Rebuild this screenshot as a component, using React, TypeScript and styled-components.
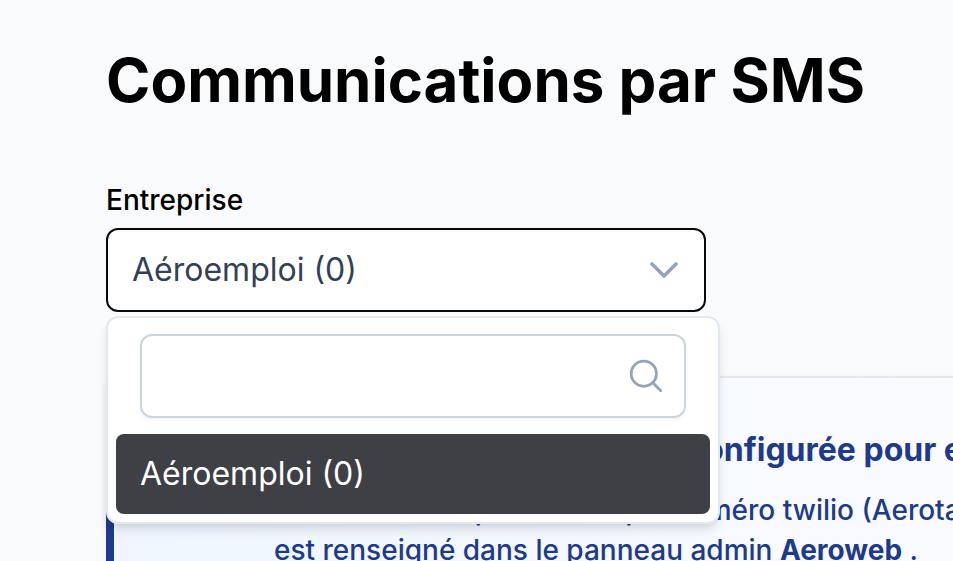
import React from "react";
import styled, { createGlobalStyle } from "styled-components";

const GlobalStyle = createGlobalStyle`
  * { box-sizing: border-box; }
  html, body { margin: 0; overflow: hidden; background: #f9fafc; }
  body { font-family: Inter, sans-serif; color: #000; }
  h1, h2, p { margin: 0; }
`;

const Page = styled.main`
  height: 561px;
  padding: 44px 0 0 106px;
  overflow: hidden;
`;

const Title = styled.h1`
  font-size: 60px;
  line-height: 72px;
  font-weight: 700;
  white-space: nowrap;
`;

const Field = styled.div`
  position: relative;
  width: 600px;
  margin-top: 64px;
`;

const Label = styled.label`
  display: block;
  font-size: 28px;
  font-weight: 500;
  line-height: 40px;
  margin-bottom: 8px;
`;

const Select = styled.div`
  display: flex;
  align-items: center;
  justify-content: space-between;
  height: 84px;
  padding: 0 26px 0 24px;
  border: 2px solid #09090b;
  border-radius: 12px;
  background: #fff;
  color: #334155;
  font-size: 32px;
`;

const Value = styled.span`
  padding-bottom: 2px;
`;

const Overlay = styled.div`
  position: absolute;
  z-index: 2;
  top: 136px;
  left: 0;
  width: 614px;
  height: 208px;
  border: 2px solid #e2e8f0;
  border-radius: 12px;
  background: #fff;
  box-shadow: 0 8px 12px -2px rgba(0, 0, 0, 0.1), 0 4px 8px -4px rgba(0, 0, 0, 0.1);
`;

const Filter = styled.div`
  display: flex;
  align-items: center;
  justify-content: flex-end;
  width: 546px;
  height: 84px;
  margin: 16px 32px;
  padding-right: 20px;
  border: 2px solid #cbd5e1;
  border-radius: 12px;
  box-shadow: 0 2px 4px rgba(18, 18, 23, 0.05);
`;

const Option = styled.div`
  display: flex;
  align-items: center;
  height: 80px;
  margin: 0 8px;
  padding: 0 24px;
  border-radius: 8px;
  background: #3f3f46;
  color: #fff;
  font-size: 32px;
`;

const Notice = styled.section`
  display: flex;
  gap: 54px;
  width: 1500px;
  height: 300px;
  margin-top: 64px;
  padding-left: 56px;
  border: 2px solid #e5e7eb;
  border-left: 8px solid #1e3a8a;
  border-radius: 12px;
  background: linear-gradient(90deg, #eff6ff, #fafbff 58%);
  box-shadow: 0 2px 6px rgba(0, 0, 0, 0.08);
  color: #1e3a8a;
`;

const InfoIcon = styled.svg`
  flex: none;
  width: 50px;
  height: 50px;
  margin-top: 98px;
`;

const NoticeBody = styled.div`
  padding-top: 48px;
  white-space: nowrap;
`;

const NoticeTitle = styled.h2`
  padding-left: 3px;
  font-size: 32px;
  line-height: 48px;
  font-weight: 700;
`;

const NoticeText = styled.p`
  margin-top: 16px;
  font-size: 28px;
  font-weight: 500;
  line-height: 40px;
  text-indent: -4px;

  strong { font-weight: 700; }
`;

export default function App() {
  return (
    <>
      <GlobalStyle />
      <Page>
        <Title>Communications par SMS</Title>
        <Field>
          <Label>Entreprise</Label>
          <Select>
            <Value>Aéroemploi (0)</Value>
            <svg width="28" height="28" viewBox="0 0 28 28" fill="none" stroke="#94a3b8" strokeWidth="3.6" strokeLinecap="round" strokeLinejoin="round">
              <path d="M2 8 14 20 26 8" />
            </svg>
          </Select>
          <Overlay>
            <Filter>
              <svg width="36" height="36" viewBox="0 0 36 36" fill="none" stroke="#94a3b8" strokeWidth="2.8" strokeLinecap="round">
                <circle cx="15.8" cy="15.7" r="12.6" />
                <path d="m24.8 24.7 8 8" />
              </svg>
            </Filter>
            <Option>
              <Value>Aéroemploi (0)</Value>
            </Option>
          </Overlay>
        </Field>
        <Notice>
          <InfoIcon viewBox="0 0 50 50" fill="none" stroke="#1e3a8a" strokeWidth="4">
            <circle cx="23" cy="24.2" r="21.4" />
            <path d="M23 21v14M23 12v4" />
          </InfoIcon>
          <NoticeBody>
            <NoticeTitle>Aucune entreprise n’a été configurée pour envoyer des SMS</NoticeTitle>
            <NoticeText>
              Vérifiez sur l’espace actif que numéro twilio (Aerotaxi)
              <br />
              est renseigné dans le panneau admin <strong>Aeroweb</strong> .
            </NoticeText>
          </NoticeBody>
        </Notice>
      </Page>
    </>
  );
}
